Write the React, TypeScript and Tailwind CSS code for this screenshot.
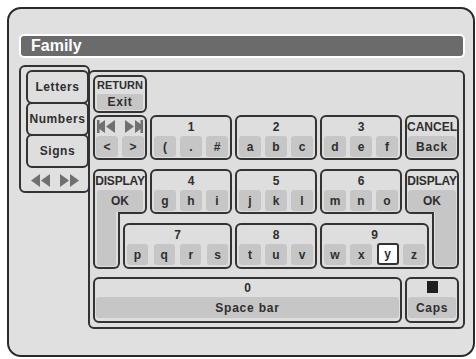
import React from 'react';

const box = 'border-2 border-[#333] bg-[#dedede]';
const gray = 'bg-[#c6c6c6] flex items-center justify-center';

const Rewind: React.FC<{ bar?: boolean; flip?: boolean; w?: number }> = ({ bar, flip, w = 20 }) => (
    <svg width={w} height="13" viewBox={`0 0 ${w} 13`} className={flip ? '-scale-x-100' : ''}>
        {bar && <rect x="0" y="0" width="2.5" height="13" fill="#707070" />}
        <polygon points={`${w - 10},0 ${w - 19},6.5 ${w - 10},13`} fill="#707070" />
        <polygon points={`${w},0 ${w - 9},6.5 ${w},13`} fill="#707070" />
    </svg>
);

const Group: React.FC<{ label: string; keys: string[]; cls: string; kw: string; sel?: string }> = ({ label, keys, cls, kw, sel }) => (
    <div className={`${box} rounded-[6px] flex flex-col ${cls}`}>
        <div className="h-[19px] flex items-center justify-center">{label}</div>
        <div className="flex justify-between px-[2px]">
            {keys.map((k) =>
                k === sel ? (
                    <div key={k} className={`${kw} h-[22px] -mt-[1px] bg-white border-2 border-[#333] rounded-[3px] flex items-center justify-center`}>
                        {k}
                    </div>
                ) : (
                    <div key={k} className={`${gray} ${kw} h-[21px] rounded-[3px]`}>
                        {k}
                    </div>
                )
            )}
        </div>
    </div>
);

export default function App() {
    return (
        <div className="w-[476px] h-[359px] bg-white pt-[7px] pl-[7px] font-['Liberation_Sans',Arial,sans-serif] font-bold text-[12px] text-[#2e2e2e] leading-none">
            <div className="w-[468px] h-[350px] border-2 border-[#2a2a2a] rounded-[14px] bg-[#e0e0e0] flex flex-col">
                {/* title */}
                <div className="ml-[10px] mt-[25px] w-[446px] h-[24px] border-2 border-white rounded-[5px] bg-[#6b6b6b] flex items-center pl-[10px] text-white text-[16px]">
                    Family
                </div>

                <div className="flex items-start mt-[7px]">
                    {/* tabs */}
                    <div className="ml-[10px] w-[71px] h-[128px] border-2 border-[#333] rounded-[6px] flex flex-col pt-[3px] tracking-[0.6px]">
                        <div className={`${box} ml-[5px] w-[63px] h-[34px] rounded-[6px] flex items-center justify-center`}>Letters</div>
                        <div className={`${box} ml-[5px] w-[63px] h-[34px] -mt-[2px] rounded-[6px] flex items-center justify-center`}>Numbers</div>
                        <div className={`${box} ml-[5px] w-[63px] h-[34px] -mt-[2px] rounded-[6px] flex items-center justify-center`}>Signs</div>
                        <div className="flex items-center gap-[10px] pl-[8px] mt-[6px]">
                            <Rewind w={21} />
                            <Rewind w={19} flip />
                        </div>
                    </div>

                    {/* keyboard */}
                    <div className={`${box} relative -ml-[2px] mt-[5px] w-[377px] h-[259px] rounded-[6px] pl-[3px] pt-[3px]`}>
                        <div className="grid grid-cols-[27px_24px_82px_82px_82px_24px_27px] grid-rows-[38px_2px_45px_9px_45px_9px_46px_8px_46px] gap-x-[3px]">
                            <div className={`${box} col-start-1 col-span-2 row-start-1 rounded-[6px] flex flex-col`}>
                                <div className="h-[17px] flex items-center justify-center text-[11px]">RETURN</div>
                                <div className={`${gray} mx-[2px] h-[16px] rounded-[2px] tracking-[0.8px]`}>Exit</div>
                            </div>

                            <div className={`${box} col-start-1 col-span-2 row-start-3 rounded-[6px] flex flex-col`}>
                                <div className="h-[19px] flex items-center justify-between px-[2px]">
                                    <Rewind bar w={18} />
                                    <Rewind bar w={18} flip />
                                </div>
                                <div className="flex justify-between px-[1px]">
                                    <div className={`${gray} w-[22px] h-[21px] rounded-[3px]`}>&lt;</div>
                                    <div className={`${gray} w-[22px] h-[21px] rounded-[3px]`}>&gt;</div>
                                </div>
                            </div>
                            <Group label="1" keys={['(', '.', '#']} kw="w-[22px]" cls="col-start-3 row-start-3" />
                            <Group label="2" keys={['a', 'b', 'c']} kw="w-[22px]" cls="col-start-4 row-start-3" />
                            <Group label="3" keys={['d', 'e', 'f']} kw="w-[22px]" cls="col-start-5 row-start-3" />
                            <div className={`${box} col-start-6 col-span-2 row-start-3 rounded-[6px] flex flex-col`}>
                                <div className="h-[19px] flex items-center justify-center">CANCEL</div>
                                <div className={`${gray} mx-[1px] h-[21px] rounded-[3px] tracking-[0.8px]`}>Back</div>
                            </div>

                            {/* left DISPLAY (L shape) */}
                            <div className={`${box} col-start-1 col-span-2 row-start-5 rounded-t-[6px] rounded-br-[6px] flex flex-col`}>
                                <div className="h-[19px] flex items-center justify-center tracking-[-0.2px]">DISPLAY</div>
                                <div className={`${gray} ml-[2px] mr-[2px] flex-1 rounded-t-[3px] rounded-br-[3px]`}>OK</div>
                            </div>
                            <div className="col-start-1 row-start-6 row-span-2 -mt-[2px] border-x-2 border-b-2 border-[#333] bg-[#dedede] rounded-b-[6px] px-[2px] pb-[1px] flex flex-col">
                                <div className="flex-1 bg-[#c6c6c6] rounded-b-[3px]" />
                            </div>

                            <Group label="4" keys={['g', 'h', 'i']} kw="w-[22px]" cls="col-start-3 row-start-5" />
                            <Group label="5" keys={['j', 'k', 'l']} kw="w-[22px]" cls="col-start-4 row-start-5" />
                            <Group label="6" keys={['m', 'n', 'o']} kw="w-[22px]" cls="col-start-5 row-start-5" />

                            {/* right DISPLAY (L shape) */}
                            <div className={`${box} col-start-6 col-span-2 row-start-5 rounded-t-[6px] rounded-bl-[6px] flex flex-col`}>
                                <div className="h-[19px] flex items-center justify-center tracking-[-0.2px]">DISPLAY</div>
                                <div className={`${gray} ml-[1px] mr-[1px] flex-1 rounded-t-[3px] rounded-bl-[3px]`}>OK</div>
                            </div>
                            <div className="col-start-7 row-start-6 row-span-2 -mt-[2px] border-x-2 border-b-2 border-[#333] bg-[#dedede] rounded-b-[6px] px-[1px] pb-[1px] flex flex-col">
                                <div className="flex-1 bg-[#c6c6c6] rounded-b-[3px]" />
                            </div>

                            <Group label="7" keys={['p', 'q', 'r', 's']} kw="w-[21px]" cls="col-start-2 col-span-2 row-start-7" />
                            <Group label="8" keys={['t', 'u', 'v']} kw="w-[22px]" cls="col-start-4 row-start-7" />
                            <Group label="9" keys={['w', 'x', 'y', 'z']} kw="w-[22px]" sel="y" cls="col-start-5 col-span-2 row-start-7" />

                            <div className={`${box} col-start-1 col-span-5 row-start-9 rounded-[6px] flex flex-col`}>
                                <div className="h-[18px] flex items-center justify-center">0</div>
                                <div className={`${gray} mx-[1px] h-[21px] rounded-[3px] tracking-[0.8px]`}>Space bar</div>
                            </div>
                            <div className={`${box} col-start-6 col-span-2 row-start-9 rounded-[6px] flex flex-col`}>
                                <div className="h-[18px] flex items-start justify-center pt-[2px]">
                                    <div className="w-[11px] h-[12px] bg-[#1e1e1e]" />
                                </div>
                                <div className={`${gray} mx-[1px] h-[21px] rounded-[3px] tracking-[0.7px]`}>Caps</div>
                            </div>
                        </div>
                    </div>
                </div>
            </div>
        </div>
    );
}
